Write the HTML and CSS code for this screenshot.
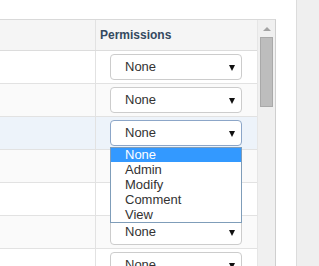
FILE: index.html
```html
<!DOCTYPE html>
<html lang="en">
<head>
    <meta charset="UTF-8">
    <meta name="viewport" content="width=device-width, initial-scale=1.0">
    <title>Permissions</title>
    <link rel="stylesheet" href="styles.css">
</head>
<body>
    <div class="page">
        <div class="panel">
            <div class="grid">
                <div class="row head">
                    <div class="cell name"></div>
                    <div class="cell perm">Permissions</div>
                </div>
                <div class="row">
                    <div class="cell name"></div>
                    <div class="cell perm"><div class="select">None</div></div>
                </div>
                <div class="row alt">
                    <div class="cell name"></div>
                    <div class="cell perm"><div class="select">None</div></div>
                </div>
                <div class="row hover">
                    <div class="cell name"></div>
                    <div class="cell perm"><div class="select focus">None</div></div>
                </div>
                <div class="row alt">
                    <div class="cell name"></div>
                    <div class="cell perm"><div class="select">None</div></div>
                </div>
                <div class="row">
                    <div class="cell name"></div>
                    <div class="cell perm"><div class="select">None</div></div>
                </div>
                <div class="row alt">
                    <div class="cell name"></div>
                    <div class="cell perm"><div class="select">None</div></div>
                </div>
                <div class="row">
                    <div class="cell name"></div>
                    <div class="cell perm"><div class="select">None</div></div>
                </div>
            </div>
            <div class="scrollbar">
                <span class="arrow-up"></span>
                <span class="thumb"></span>
            </div>

            <!-- open list of the focused select -->
            <ul class="options">
                <li class="picked">None</li>
                <li>Admin</li>
                <li>Modify</li>
                <li>Comment</li>
                <li>View</li>
            </ul>
        </div>
        <div class="side"></div>
    </div>
</body>
</html>
```

FILE: styles.css
```css
* {
    margin: 0;
    padding: 0;
    box-sizing: border-box;
}

body {
    font-family: 'Liberation Sans', Arial, sans-serif;
    background: #fff;
    color: #333;
    height: 266px;
    overflow: hidden;
}

.page {
    display: flex;
    height: 266px;
}

.panel {
    position: relative;
    display: flex;
    width: 276px;
    margin-top: 19px;
    border-top: 1px solid #d9d9d9;
    border-right: 1px solid #cfcfcf;
    overflow: hidden;
}

.grid {
    width: 257px;
    flex: none;
}

.row {
    display: flex;
    height: 33px;
    border-bottom: 1px solid #e2e2e2;
    background: #fff;
}

.row.alt {
    background: #fafafa;
}

.row.hover {
    background: #edf3fa;
}

.row.head {
    height: 31px;
    background: #f5f5f5;
    border-bottom-color: #dcdcdc;
}

.cell.name {
    width: 96px;
    border-right: 1px solid #e2e2e2;
}

.cell.perm {
    flex: 1;
    padding: 3px 0 0 14px;
}

.head .cell.perm {
    padding: 0 0 0 4px;
    display: flex;
    align-items: center;
    font-size: 12px;
    font-weight: bold;
    color: #34495e;
}

.select {
    position: relative;
    width: 132px;
    height: 26px;
    border: 1px solid #cccccc;
    border-radius: 4px;
    background: #fff;
    font-size: 13px;
    line-height: 24px;
    padding-left: 14px;
}

.select::after {
    content: '';
    position: absolute;
    right: 6px;
    top: 10px;
    border-left: 3px solid transparent;
    border-right: 3px solid transparent;
    border-top: 6px solid #111;
}

.select.focus {
    border-color: #8ca6c8;
}

.scrollbar {
    position: relative;
    width: 18px;
    background: #f0f0f0;
    border-left: 1px solid #e6e6e6;
}

.arrow-up {
    position: absolute;
    left: 5px;
    top: 7px;
    border-left: 4px solid transparent;
    border-right: 4px solid transparent;
    border-bottom: 4px solid #a3a3a3;
}

.thumb {
    position: absolute;
    left: 2px;
    top: 17px;
    width: 13px;
    height: 70px;
    background: #bdbdbd;
    border: 1px solid #a9a9a9;
}

.options {
    position: absolute;
    left: 110px;
    top: 127px;
    width: 132px;
    list-style: none;
    background: #fff;
    border: 1px solid #7f9db9;
    font-size: 13px;
    line-height: 15px;
}

.options li {
    padding-left: 14px;
    height: 15px;
}

.options li:first-child {
    height: 14px;
    line-height: 14px;
}

.options .picked {
    background: #3399ff;
    color: #fff;
}

.side {
    margin-left: 20px;
    flex: 1;
    background: #efefef;
    border-left: 1px solid #dcdcdc;
}
```
